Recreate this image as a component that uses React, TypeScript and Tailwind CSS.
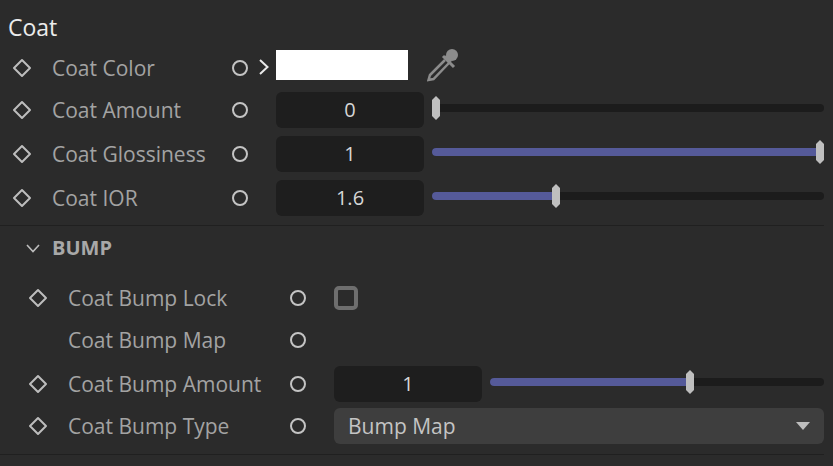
const font = "font-['Open_Sans','Noto_Sans',sans-serif]"

const Diamond = () => (
  <svg width="20" height="20" viewBox="0 0 20 20" fill="none" stroke="#bdbdbd" strokeWidth="2">
    <path d="M10 2 L18 10 L10 18 L2 10 Z" strokeLinejoin="round" />
  </svg>
)

const Port = () => <div className="w-4 h-4 rounded-full border-2 border-[#c4c4c4]" />

const Thumb = () => (
  <svg width="8" height="24" viewBox="0 0 8 24" className="block">
    <path d="M4 0 L8 4 V20 L4 24 L0 20 V4 Z" fill="#bfbfbf" />
  </svg>
)

const Slider = ({ percent }: { percent: number }) => (
  <div className="relative flex-1 h-2 mb-1 rounded-full bg-[#1c1c1c]">
    <div className="h-2 rounded-l-full bg-[#555a99]" style={{ width: `${percent}%` }} />
    <div className="absolute -top-2 -ml-1" style={{ left: `${percent}%` }}>
      <Thumb />
    </div>
  </div>
)

const Field = ({ value }: { value: string }) => (
  <div className="w-[148px] h-9 shrink-0 rounded-md bg-[#1e1e1e] flex items-center justify-center text-[20px] text-[#d6d6d6]">
    {value}
  </div>
)

interface RowProps {
  label: string
  height: string
  keyed?: boolean
  nested?: boolean
  children?: React.ReactNode
}

const Row = ({ label, height, keyed = true, nested = false, children }: RowProps) => (
  <div className={`flex items-center ${height} ${nested ? "pl-[28px]" : "pl-3"}`}>
    <div className="w-5 flex justify-center">{keyed && <Diamond />}</div>
    <div className={`ml-5 pt-[2px] text-[21px] text-[#a3a3a3] ${nested ? "w-[222px]" : "w-[180px]"}`}>{label}</div>
    <Port />
    {children}
  </div>
)

export default function App() {
  return (
    <div className={`w-[833px] h-[466px] overflow-hidden bg-[#2b2b2b] ${font}`}>
      {/* Coat section */}
      <div className="pl-2 pt-[11px] h-[47px] text-[23px] leading-[32px] text-[#ebebeb]">Coat</div>
      <div className="pr-[9px]">
        <Row label="Coat Color" height="h-[42px]">
          <div className="ml-[10px] w-[16px] flex mb-[2px]">
            <svg width="12" height="18" viewBox="0 0 12 18" fill="none" stroke="#e8e8e8" strokeWidth="2">
              <path d="M2 2 L9.5 9 L2 16" />
            </svg>
          </div>
          <div className="w-[132px] h-[30px] bg-white ml-[2px] mb-[6px]" />
          <svg className="ml-[19px] mb-[6px]" width="32" height="34" viewBox="0 0 32 34" fill="none">
            <path d="M18 12 L3 27 L1.5 32 L6.5 31 L22 15" stroke="#8c8c8c" strokeWidth="2.5" />
            <path d="M16 8 L27 19" stroke="#8c8c8c" strokeWidth="3" />
            <circle cx="25" cy="7" r="6" fill="#8c8c8c" />
            <path d="M19 7 L25 13 L22 15 L17 10 Z" fill="#8c8c8c" />
          </svg>
        </Row>
        <Row label="Coat Amount" height="h-[42px]">
          <div className="ml-[28px] flex items-center gap-2 flex-1">
            <Field value="0" />
            <Slider percent={1} />
          </div>
        </Row>
        <div className="pt-[1px]">
          <Row label="Coat Glossiness" height="h-[44px]">
            <div className="ml-[28px] flex items-center gap-2 flex-1">
              <Field value="1" />
              <Slider percent={99} />
            </div>
          </Row>
        </div>
        <Row label="Coat IOR" height="h-[44px]">
          <div className="ml-[28px] flex items-center gap-2 flex-1">
            <Field value="1.6" />
            <Slider percent={31.6} />
          </div>
        </Row>
      </div>

      <div className="mt-[5px] mr-[9px] h-[1px] bg-[#202020]" />

      {/* Bump section */}
      <div className="pl-[26px] h-[44px] flex items-center gap-[12px]">
        <svg width="14" height="9" viewBox="0 0 14 9" fill="none" stroke="#bdbdbd" strokeWidth="1.6">
          <path d="M1 1 L7 7.5 L13 1" />
        </svg>
        <span className="text-[20px] leading-[28px] font-bold text-[#a8a8a8]">BUMP</span>
      </div>

      <div className="pt-[7px] pr-[9px]">
        <Row label="Coat Bump Lock" height="h-[42px]" nested>
          <div className="ml-[28px] w-6 h-6 rounded-[5px] border-[4px] border-[#6e6e6e]" />
        </Row>
        <Row label="Coat Bump Map" height="h-[42px]" keyed={false} nested />
        <div className="pt-[1px]">
          <Row label="Coat Bump Amount" height="h-[44px]" nested>
            <div className="ml-[28px] flex items-center gap-2 flex-1">
              <Field value="1" />
              <Slider percent={59.8} />
            </div>
          </Row>
        </div>
        <Row label="Coat Bump Type" height="h-[40px]" nested>
          <div className="ml-[28px] flex-1 h-9 rounded-md bg-[#3e3e3e] flex items-center justify-between pl-[14px] pr-[14px] text-[21px] text-[#c4c4c4]">
            <span className="pt-[2px]">Bump Map</span>
            <svg width="14" height="8" viewBox="0 0 14 8">
              <path d="M0 0 H14 L7 8 Z" fill="#bdbdbd" />
            </svg>
          </div>
        </Row>
      </div>

      <div className="mt-[8px] mr-[9px] h-[1px] bg-[#202020]" />
    </div>
  )
}
